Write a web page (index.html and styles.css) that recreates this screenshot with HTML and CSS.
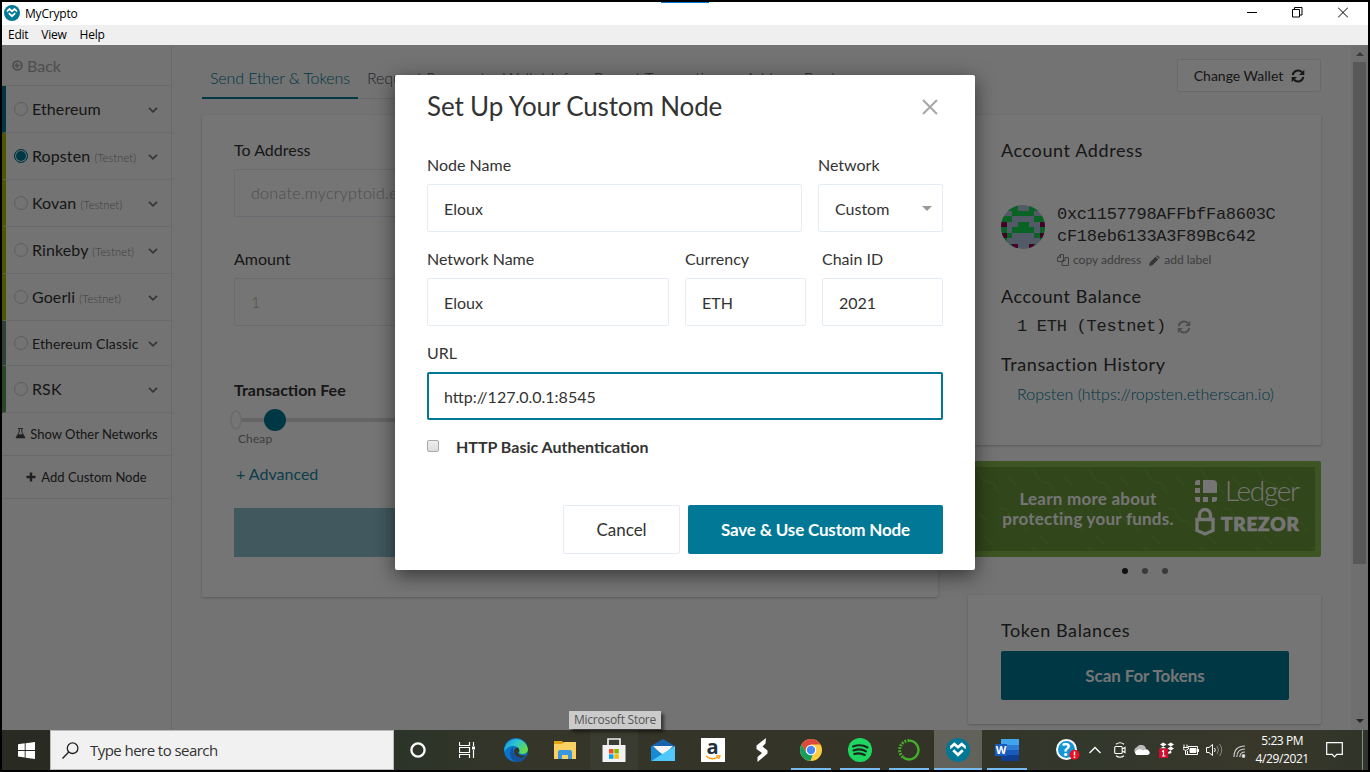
FILE: index.html
```html
<!DOCTYPE html>
<html lang="en">
<head>
<meta charset="utf-8">
<title>MyCrypto</title>
<link rel="stylesheet" href="styles.css">
</head>
<body>
<svg class="defs" width="0" height="0">
  <symbol id="chev" viewBox="0 0 10 8"><path d="M1 1.8 5 5.8 9 1.8" fill="none" stroke="currentColor" stroke-width="1.8"/></symbol>
  <symbol id="refresh" viewBox="0 0 14 14"><path d="M1.7 6.2A5.4 5.4 0 0 1 11 3.3M12.3 7.8A5.4 5.4 0 0 1 3 10.7" fill="none" stroke="currentColor" stroke-width="2"/><path d="M13.3.8V6H8.1ZM.7 13.2V8H5.9Z" fill="currentColor"/></symbol>
  <symbol id="mc" viewBox="0 0 24 24"><circle cx="12" cy="12" r="12" fill="#007896"/><path d="M4.8 9.2 8.3 6 12 9.3 15.7 6 19.2 9.2M7.2 12.3 12 16.8 16.8 12.3" fill="none" stroke="#fff" stroke-width="2.7"/><path d="M4.8 8.4V11M19.2 8.4V11" stroke="#fff" stroke-width="1"/></symbol>
</svg>
<div class="screen">
  <header class="titlebar">
    <svg class="app-icon" width="16" height="16"><use href="#mc"/></svg>
    <span class="app-name">MyCrypto</span>
    <span class="title-accent"></span>
    <svg class="win-btn" width="10" height="11" viewBox="0 0 10 11"><path d="M0 5.5H10" stroke="#000"/></svg>
    <svg class="win-btn" width="11" height="11" viewBox="0 0 11 11"><path d="M.5 2.5H7.5V10H.5ZM2.5 2.5V.5H10V8H7.5" fill="none" stroke="#000"/></svg>
    <svg class="win-btn" width="10" height="11" viewBox="0 0 10 11"><path d="M0 .5 10 10.5M10 .5 0 10.5" stroke="#000"/></svg>
  </header>
  <nav class="menubar"><span>Edit</span><span>View</span><span>Help</span></nav>

  <div class="app">
    <aside class="sidebar">
      <div class="back"><svg width="11" height="11" viewBox="0 0 11 11"><circle cx="5.5" cy="5.5" r="4.4" fill="none" stroke="currentColor" stroke-width="1.8"/><path d="M8.5 5.5H3.4M5.6 3.2 3.4 5.5 5.6 7.8" fill="none" stroke="currentColor" stroke-width="1.4"/></svg>Back</div>
      <div class="net c-eth"><i class="radio"></i><span>Ethereum</span><svg class="chev"><use href="#chev"/></svg></div>
      <div class="net c-test"><i class="radio on"></i><span>Ropsten <small>(Testnet)</small></span><svg class="chev"><use href="#chev"/></svg></div>
      <div class="net c-test"><i class="radio"></i><span>Kovan <small>(Testnet)</small></span><svg class="chev"><use href="#chev"/></svg></div>
      <div class="net c-test"><i class="radio"></i><span>Rinkeby <small>(Testnet)</small></span><svg class="chev"><use href="#chev"/></svg></div>
      <div class="net c-test"><i class="radio"></i><span>Goerli <small>(Testnet)</small></span><svg class="chev"><use href="#chev"/></svg></div>
      <div class="net c-etc"><i class="radio"></i><span>Ethereum Classic</span><svg class="chev"><use href="#chev"/></svg></div>
      <div class="net c-rsk"><i class="radio"></i><span>RSK</span><svg class="chev"><use href="#chev"/></svg></div>
      <div class="side-link"><svg width="11" height="11" viewBox="0 0 11 11"><path d="M3 .5H8M4.2.5V4L1 9.8H10L6.8 4V.5" fill="none" stroke="#555"/><path d="M3.2 6.3H7.8L9.8 10H1.2Z" fill="#444"/></svg>Show Other Networks</div>
      <div class="side-link add"><svg width="10" height="10" viewBox="0 0 10 10"><path d="M5 .5V9.5M.5 5H9.5" stroke="#444" stroke-width="2.4"/></svg>Add Custom Node</div>
    </aside>

    <main class="main">
      <div class="tabs"><span class="tab active">Send Ether &amp; Tokens</span><span class="tab">Request Payment</span><span class="tab">Wallet Info</span><span class="tab">Recent Transactions</span><span class="tab">Address Book</span></div>
      <section class="card send">
        <label class="lbl">To Address</label>
        <div class="field ghost">donate.mycryptoid.eth</div>
        <label class="lbl amount">Amount</label>
        <div class="field ghost">1</div>
        <div class="fee">Transaction Fee</div>
        <div class="slider"><i class="cap"></i><i class="knob"></i><i class="rail"></i></div>
        <div class="cheap">Cheap</div>
        <div class="advanced">+ Advanced</div>
        <div class="send-btn"></div>
      </section>
    </main>

    <aside class="right">
      <div class="change">Change Wallet <svg width="14" height="14"><use href="#refresh"/></svg></div>
      <section class="card account">
        <h2>Account Address</h2>
        <div class="address">
          <svg class="identicon" width="44" height="44" viewBox="0 0 8 8" shape-rendering="crispEdges"><path fill="#b0c4de" d="M0 0H8V8H0Z"/><path fill="#14d84f" d="M1 0H3V1H5V0H7V1H6V2H8V3H6V2H2V3H0V2H2V1H1ZM3 3H5V4H6V5H2V4H3ZM0 4H1V5H2V6H1V7H0ZM7 4H8V7H7V6H6V5H7ZM1 7H2V8H1ZM6 7H7V8H6Z"/><path fill="#950050" d="M0 3H1V4H0ZM7 3H8V4H7ZM0 5H1V6H0ZM7 5H8V6H7ZM2 7H3V8H2ZM5 7H6V8H5Z"/></svg>
          <div>
            <div class="mono">0xc1157798AFFbfFa8603C<br>cF18eb6133A3F89Bc642</div>
            <div class="tools"><svg width="12" height="12" viewBox="0 0 12 12"><path d="M3.5.5H6.5V7.5H.5V3.5ZM3.5.5V3.5H.5M8 3.5H11.5V11.5H5V7.5M8 3.5V6.5H5" fill="none" stroke="#888"/></svg>copy address<svg class="pencil" width="11" height="11" viewBox="0 0 11 11"><path d="M0 11 .8 7.5 6.6 1.8 9.2 4.4 3.5 10.2ZM7.3 1.1 8.3.2 10.8 2.7 9.9 3.7Z" fill="#777"/></svg>add label</div>
          </div>
        </div>
        <h2 class="bal-title">Account Balance</h2>
        <div class="mono balance">1 ETH (Testnet) <svg width="14" height="14"><use href="#refresh"/></svg></div>
        <h2 class="hist-title">Transaction History</h2>
        <div class="hist">Ropsten (https://ropsten.etherscan.io)</div>
      </section>
      <section class="promo">
        <svg class="waves" width="341" height="84"><defs><pattern id="w" width="56" height="78" patternUnits="userSpaceOnUse"><path d="M-4 4C2 0 6 4 7 9S13 15 18 16 21 24 26 26M24 43C30 39 34 43 35 48S41 54 46 55 49 63 54 65M34 10 43 18M4 46 13 54M10 69 19 77" fill="none" stroke="#77ae4a" stroke-width="2"/></pattern></defs><rect width="341" height="84" fill="url(#w)"/></svg>
        <p>Learn more about<br>protecting your funds.</p>
        <div class="brands">
          <div class="brand"><svg width="22" height="22" viewBox="0 0 22 22"><path fill="#fff" d="M8 0H18Q22 0 22 4V13H8ZM0 8H5V13H0ZM0 5V3Q0 0 3 0H5V5ZM0 17H5V22H3Q0 22 0 19ZM8 17H13V22H8ZM17 17H22V19Q22 22 19 22H17Z"/></svg><span class="ledger">Ledger</span></div>
          <div class="brand second"><svg width="20" height="28" viewBox="0 0 20 28"><path d="M4.5 11V7A5.5 5.5 0 0 1 15.5 7V11M2 11.5H18V22.5L10 26 2 22.5Z" fill="none" stroke="#fff" stroke-width="3.4"/></svg><span class="trezor">TREZOR</span></div>
        </div>
      </section>
      <div class="dots"><i class="cur"></i><i></i><i></i></div>
      <section class="card tokens"><h2>Token Balances</h2><div class="scan">Scan For Tokens</div></section>
    </aside>
    <div class="scrollbar"><svg width="8" height="4"><path d="M0 4 4 0 8 4Z" fill="#808080"/></svg><div class="thumb"></div><svg width="8" height="4"><path d="M0 0 4 4 8 0Z" fill="#505050"/></svg></div>

    <div class="backdrop"></div>
    <div class="modal">
      <div class="modal-head"><h1>Set Up Your Custom Node</h1><svg width="16" height="16" viewBox="0 0 16 16"><path d="M1 1 15 15M15 1 1 15" stroke="#aaa" stroke-width="2.2"/></svg></div>
      <div class="row"><div class="grow"><label class="lbl">Node Name</label><div class="field">Eloux</div></div><div class="w125"><label class="lbl">Network</label><div class="field select">Custom<svg width="10" height="5"><path d="M0 0H10L5 5Z" fill="#999"/></svg></div></div></div>
      <div class="row"><div class="grow"><label class="lbl">Network Name</label><div class="field">Eloux</div></div><div class="w121"><label class="lbl">Currency</label><div class="field">ETH</div></div><div class="w121"><label class="lbl">Chain ID</label><div class="field">2021</div></div></div>
      <div class="row"><div class="grow"><label class="lbl">URL</label><div class="field focus">http://127.0.0.1:8545</div></div></div>
      <div class="auth"><i class="check"></i>HTTP Basic Authentication</div>
      <div class="actions"><div class="btn cancel">Cancel</div><div class="btn save">Save &amp; Use Custom Node</div></div>
    </div>
    <div class="tooltip">Microsoft Store</div>
  </div>

  <footer class="taskbar">
    <div class="start"><svg width="17" height="17" viewBox="0 0 17 17"><path fill="#fff" d="M0 2.3 6.7 1.3V8H0ZM7.6 1.2 17 0V8H7.6ZM0 8.9H6.7V15.5L0 14.6ZM7.6 8.9H17V17L7.6 15.7Z"/></svg></div>
    <div class="search"><svg width="17" height="17" viewBox="0 0 17 17"><circle cx="10.6" cy="6.2" r="5.3" fill="none" stroke="#222" stroke-width="1.3"/><path d="M6.8 10 .5 16.4" stroke="#222" stroke-width="1.4"/></svg>Type here to search</div>
    <div class="task"><svg width="16" height="16"><circle cx="8" cy="8" r="6.6" fill="none" stroke="#fff" stroke-width="2.3"/></svg></div>
    <div class="task"><svg width="17" height="16" viewBox="0 0 17 16" fill="none" stroke="#fff"><path d="M.5 0V3.5H10.5V0M.5 16V12.5H10.5V16M.5 5.5H10.5V10.5H.5ZM14.5 0V4M14.5 8V16" stroke-width="1.2"/><path d="M13 6H16" stroke-width="3"/></svg></div>
    <div class="task"><svg width="24" height="24" viewBox="0 0 24 24"><defs><linearGradient id="eg" x1="0" y1="0" x2="1" y2=".5"><stop offset="0" stop-color="#1593d8"/><stop offset=".5" stop-color="#2cc4d4"/><stop offset="1" stop-color="#62dc4b"/></linearGradient></defs><circle cx="12" cy="12" r="12" fill="#0b73c9"/><path d="M.5 10A12 12 0 0 1 24 11C24 16 18 17 15 15 17 12 14 8 9 8 5 8 2 10 .5 14Z" fill="url(#eg)"/><path d="M13 9.5C8 11 9 19 17 20 19 20 21 19 22.5 17 19 18.5 14 17 14 14.5 16 13 15.5 10 13 9.5" fill="#33382e"/><path d="M9 9C3 15 7 23 13 24 17 24 20 22 22 18 18 22 8 20 9 9" fill="#15519d"/></svg></div>
    <div class="task"><svg width="22" height="20" viewBox="0 0 22 20"><path fill="#e5a314" d="M0 1H8L10 3V8H0Z"/><path fill="#fcd163" d="M0 4H8L10 2H22V19H0Z"/><path fill="#3b97dd" d="M4 19V12Q4 10 6 10H16Q18 10 18 12V19H14V15H8V19Z"/></svg></div>
    <div class="task hover"><svg width="24" height="24" viewBox="0 0 24 24"><path d="M6 7V1H18V7" fill="none" stroke="#eee" stroke-width="1.7"/><path fill="#f2f2f2" d="M.5 7H23.5V24H.5Z"/><path fill="#f25022" d="M7 11H11.5V15.5H7Z"/><path fill="#7fba00" d="M12.3 11H16.8V15.5H12.3Z"/><path fill="#00a4ef" d="M7 16.3H11.5V20.8H7Z"/><path fill="#ffb900" d="M12.3 16.3H16.8V20.8H12.3Z"/></svg></div>
    <div class="task"><svg width="24" height="22" viewBox="0 0 24 22"><path fill="#1764ae" d="M0 7 12 0 24 7V13H0Z"/><path fill="#f4f4f4" d="M2 7H22L12 17Z"/><path fill="#1e9fe4" d="M0 7 12 16 0 22Z"/><path fill="#50c8fa" d="M24 7 0 22H24Z"/><path fill="#168bd4" d="M0 7 11 15 0 22Z"/></svg></div>
    <div class="task"><div class="amazon">a<svg width="16" height="5" viewBox="0 0 16 5"><path d="M1 1Q7 6 13 2M11 .8H15L13.5 4" fill="none" stroke="#f90" stroke-width="1.3"/></svg></div></div>
    <div class="task"><svg width="12" height="24" viewBox="0 0 12 24"><path fill="#fff" d="M10 0 .5 7.5V11L6 15 1.5 19V24L11.5 15.5V12.5L6.5 8.5 9.5 5.5Z"/></svg></div>
    <div class="task open"><svg width="22" height="22" viewBox="0 0 22 22"><circle cx="11" cy="11" r="11" fill="#ffcd42"/><path fill="#db4a3b" d="M1.5 5.5A11 11 0 0 1 20.5 5.5H11L6 13Z"/><path fill="#169f5c" d="M1.5 5.5 6.5 14 13 15 10.5 22A11 11 0 0 1 1.5 5.5"/><circle cx="11" cy="11" r="5.3" fill="#fff"/><circle cx="11" cy="11" r="4.2" fill="#4788f4"/></svg></div>
    <div class="task open"><svg width="24" height="24" viewBox="0 0 24 24"><circle cx="12" cy="12" r="12" fill="#1ed760"/><path d="M5 8.5Q13 5.7 19.5 9.5M5.5 12.5Q12.5 10 18 13.3M6.2 16Q12 14.3 16.8 17" fill="none" stroke="#20251d" stroke-width="2.1" stroke-linecap="round"/></svg></div>
    <div class="task open"><svg width="22" height="22" viewBox="0 0 22 22"><path d="M11 1.6A9.4 9.4 0 1 1 5 18.2" fill="none" stroke="#43b02a" stroke-width="2.4"/><path d="M5 18.2A9.4 9.4 0 0 1 11 1.6" fill="none" stroke="#43b02a" stroke-width="3" stroke-dasharray="1.8 1.2"/></svg></div>
    <div class="task open current"><svg width="24" height="24"><use href="#mc"/></svg></div>
    <div class="task open"><svg width="24" height="22" viewBox="0 0 24 22"><path fill="#41a5ee" d="M6 0H24V6H6Z"/><path fill="#2b7cd3" d="M6 6H24V11H6Z"/><path fill="#185abd" d="M6 11H24V16H6Z"/><path fill="#103f91" d="M6 16H24V22H6Z"/><path fill="#185abd" d="M0 5H12V17H0Z"/><text x=".7" y="14.8" class="word">W</text></svg></div>
    <div class="tray">
      <svg width="24" height="22" viewBox="0 0 24 22"><circle cx="10.5" cy="10.5" r="9.5" fill="#1495d4" stroke="#fff" stroke-width="2"/><text x="6" y="16.5" class="q">?</text><circle cx="18.5" cy="15.7" r="5" fill="#e81123"/><path d="M18.5 12.6V16.6M18.5 17.6V19" stroke="#fff" stroke-width="1.5"/></svg>
      <svg class="t-up" width="12" height="8"><path d="M.5 7 6 1.5 11.5 7" fill="none" stroke="#fff" stroke-width="1.3"/></svg>
      <svg class="t-meet" width="12" height="16" fill="none" stroke="#fff" stroke-width="1.1"><rect x=".7" y="4.5" width="7.5" height="7" rx="1"/><path d="M8.2 7 11 5.5V10.5L8.2 9M2 2.3Q6-.8 10 2.3M2 13.7Q6 16.8 10 13.7"/></svg>
      <svg class="t-cloud" width="16" height="10" viewBox="0 0 16 10"><path fill="#bbb" d="M1 8A4 4 0 0 1 3 2 5 5 0 0 1 12 4L6 8Z"/><path fill="#fff" d="M2.5 10A2.5 2.5 0 0 1 2.5 5.5Q6 3 9 5.5 13 3 15 6 17 9 13.5 10Z"/></svg>
      <svg class="t-box" width="16" height="16" viewBox="0 0 16 16"><path fill="#fff" d="M1 2.5 4.2.5 7.5 2.5 4.2 4.5ZM8.5 2.5 11.8.5 15 2.5 11.8 4.5ZM1 6.5 4.2 4.5 7.5 6.5ZM8.5 6.5 11.8 4.5 15 6.5 11.8 8.5ZM9 10 12 8.5 12.5 11 9.5 12Z"/><path fill="#d50a2d" d="M0 6.5H9V16H0Z"/><path d="M3 9.5 4.5 8.5V14M3 14H6.5" fill="none" stroke="#fff" stroke-width="1.2"/></svg>
      <svg class="t-bat" width="16" height="12" viewBox="0 0 16 12" fill="none" stroke="#fff"><path d="M5 2.5H14.5V10.5H4.5V7M15.5 5V8M1 .5V3M4 .5V3M0 3.5H5.5V5Q2.7 8 0 5ZM2.5 6.5V10.5H4.5"/><path d="M7 4.5H13V8.5H7Z" fill="#fff"/></svg>
      <svg class="t-vol" width="17" height="14" viewBox="0 0 17 14" fill="none" stroke="#fff"><path d="M.5 4.5H3L6.5 1.5V12.5L3 9.5H.5ZM8.5 5Q10 7 8.5 9"/><path d="M11 3Q14 7 11 11M13.5 1Q18 7 13.5 13" stroke="#888"/></svg>
      <svg class="t-wifi" width="13" height="13" viewBox="0 0 13 13" fill="none" stroke="#ccc" stroke-width="1.2"><path d="M1 12Q1 1 12 1M3.8 12Q4 4 12 4M6.8 12Q7 7 12 7"/><circle cx="10.5" cy="11" r="1.3" fill="#fff"/></svg>
      <div class="clock">5:23 PM<br>4/29/2021</div>
      <svg class="t-note" width="17" height="16" viewBox="0 0 17 16"><path d="M.7.7H16.3V12.3H10.8L8.5 14.9 6.2 12.3H.7Z" fill="none" stroke="#fff" stroke-width="1.2"/></svg>
      <i class="desk"></i>
    </div>
  </footer>
</div>
</body>
</html>
```
FILE: styles.css
```css
* { box-sizing: border-box; }
body { margin: 0; background: #000; font-family: Lato, sans-serif; color: #333; }
i { font-style: normal; }
h1, h2, p { margin: 0; font-weight: 400; }
svg { display: block; flex: none; }
.defs { position: absolute; }
.screen { width: 1370px; height: 772px; border: 2px solid #000; display: flex; flex-direction: column; overflow: hidden; }

.titlebar { height: 23px; flex: none; background: #fff; display: flex; align-items: center; padding: 0 20px 3px 2px; font: 12px "Open Sans", sans-serif; color: #000; }
.app-icon { margin-top: 2px; }
.app-name { margin: 3px 0 0 5px; letter-spacing: -.2px; }
.title-accent { width: 48px; height: 1px; background: #0078d7; margin: -20px auto 0 583px; }
.win-btn + .win-btn { margin-left: 35px; }
.menubar { height: 20px; flex: none; background: #efefef; display: flex; align-items: center; gap: 13px; padding: 0 0 1px 6px; font: 12px "Open Sans", sans-serif; letter-spacing: -.25px; color: #000; }

.app { position: relative; height: 685px; flex: none; display: flex; background: #fafafa; }
.sidebar { width: 170px; border-right: 1px solid #e5e5e5; font-size: 16px; }
.back { height: 41px; border-bottom: 1px solid #e5e5e5; display: flex; align-items: center; gap: 4px; padding: 0 0 0 10px; color: #aaa; }
.net { height: 47px; border-bottom: 1px solid #e5e5e5; border-left: 4px solid; display: flex; align-items: center; padding: 0 13px 0 8px; }
.net span { color: #333; margin: -1px 0 0 4px; white-space: nowrap; letter-spacing: .1px; }
.net small { font-size: 11px; color: #888; font-weight: 300; letter-spacing: .15px; }
.chev { width: 10px; height: 8px; color: #777; margin: 2px 0 0 auto; }
.c-eth { border-left-color: #007896; }
.c-test { border-left-color: #adc101; }
.c-etc { border-left-color: #669073; height: 45px; }
.c-etc span { font-size: 14px; margin-top: 0; }
.c-rsk { border-left-color: #58a052; }
.radio { width: 14px; height: 14px; border: 1px solid #ccc; border-radius: 50%; flex: none; }
.radio.on { border-color: #007896; background: #007896; box-shadow: inset 0 0 0 1px #fff; }
.side-link { height: 43px; border-bottom: 1px solid #e5e5e5; display: flex; align-items: center; justify-content: center; gap: 4px; font-size: 13px; padding-bottom: 1px; }
.side-link.add { gap: 5px; }

.main { width: 736px; margin-left: 30px; }
.tabs { display: flex; height: 54px; font-size: 16px; font-weight: 300; white-space: nowrap; }
.tab { padding: 23px 8px 0 9px; border-bottom: 1px solid #e5e5e5; color: #556; letter-spacing: -.1px; }
.tab.active { width: 156px; padding: 23px 8px 0; color: #007896; border-bottom: 2px solid #007896; letter-spacing: -.12px; }
.card { background: #fff; border-radius: 2px; box-shadow: 0 1px 3px rgba(0,0,0,.22); }
.send { margin-top: 16px; height: 482px; padding: 24px 32px 0; }
.lbl { display: block; height: 30px; font-size: 16px; line-height: 22px; }
.field { height: 48px; border: 1px solid #e5ecf3; border-radius: 2px; background: #fff; padding: 0 16px; display: flex; align-items: center; font-size: 16px; }
.ghost { color: #aaa; font-weight: 300; letter-spacing: .3px; padding-bottom: 1px; }
.amount { margin-top: 31px; }
.fee { margin-top: 53px; font-weight: 700; font-size: 16px; line-height: 22px; }
.slider { display: flex; align-items: center; height: 22px; margin-top: 8px; margin-left: -4px; position: relative; }
.cap { width: 12px; height: 20px; border: 2px solid #e9e9e9; border-radius: 50%; background: #fff; }
.rail { height: 4px; flex: 1; background: #dcdcdc; }
.knob { position: absolute; left: 34px; width: 22px; height: 22px; border-radius: 50%; background: #007896; }
.cheap { margin: 0 0 0 4px; font-size: 12px; line-height: 16px; color: #888; letter-spacing: .1px; }
.advanced { margin: 16px 0 0 2px; font-size: 16px; line-height: 22px; color: #1a86a1; }
.send-btn { margin-top: 23px; height: 49px; background: #8cbfcd; }

.right { width: 353px; margin-left: 30px; }
.change { width: 144px; height: 33px; margin: 14px 0 0 209px; border: 1px solid #e5e5e5; border-radius: 2px; background: #fff; display: flex; align-items: center; justify-content: center; gap: 8px; padding-left: 1px; font-size: 14px; }
.card h2 { font-size: 18px; line-height: 24px; letter-spacing: .6px; }
.account { margin-top: 23px; height: 330px; padding: 23px 32px 0 33px; }
.address { display: flex; margin-top: 41px; gap: 12px; }
.identicon { border-radius: 50%; margin-top: 2px; }
.mono { font-family: "Liberation Mono", monospace; font-size: 17px; line-height: 22px; letter-spacing: -.27px; padding-top: 1px; color: #3a3a3a; }
.tools { display: flex; align-items: center; font-size: 12px; line-height: 16px; margin-top: 4px; gap: 4px; color: #888; }
.pencil { margin-left: 4px; }
.bal-title { margin-top: 16px; }
.balance { margin: 7px 0 0 16px; display: flex; align-items: center; gap: 11px; }
.balance svg { color: #aaa; }
.hist-title { margin-top: 14px; }
.hist { margin: 7px 0 0 16px; font-size: 16px; line-height: 22px; font-weight: 300; color: #007896; white-space: nowrap; }
.promo { margin-top: 16px; height: 96px; border: 6px solid #86b74e; border-radius: 2px; background: #6b993a; display: flex; color: #fff; position: relative; }
.waves { position: absolute; left: 0; top: 0; opacity: .5; }
.promo p { position: relative; margin: 22px 0 0 27px; width: 174px; text-align: center; white-space: nowrap; font-weight: 700; font-size: 17px; line-height: 20px; letter-spacing: .23px; }
.brands { position: relative; margin: 12px 0 0 20px; }
.brand { display: flex; align-items: center; gap: 8px; height: 24px; }
.second { margin-top: 7px; gap: 6px; }
.ledger { font-weight: 300; font-size: 28px; letter-spacing: -1.3px; margin-top: -2px; }
.trezor { font-weight: 900; font-size: 19px; letter-spacing: .8px; padding-top: 2px; -webkit-text-stroke: .7px #fff; }
.dots { display: flex; justify-content: center; gap: 14px; margin-top: 11px; height: 6px; }
.dots i { width: 6px; height: 6px; border-radius: 50%; background: #7c7c7c; }
.dots .cur { background: #222; }
.tokens { margin-top: 21px; height: 129px; padding: 23px 32px 0 33px; }
.scan { margin-top: 9px; height: 49px; border-radius: 2px; background: #007896; color: #fff; display: flex; align-items: center; justify-content: center; font-size: 17px; font-weight: 700; letter-spacing: -.1px; }
.scrollbar { margin-left: 30px; width: 17px; background: #f1f1f1; display: flex; flex-direction: column; align-items: center; padding: 7px 0 7px; justify-content: space-between; }
.thumb { width: 13px; height: 502px; margin: 6px 0 auto; background: #c1c1c1; }

.backdrop { position: absolute; inset: 0; background: rgba(0,0,0,.54); }
.modal { position: absolute; left: 393px; top: 30px; width: 580px; height: 495px; background: #fff; border-radius: 2px; padding: 16px 32px; box-shadow: 0 5px 20px rgba(0,0,0,.55); }
.modal-head { display: flex; align-items: center; justify-content: space-between; height: 32px; padding-right: 5px; margin-bottom: 31px; }
.modal h1 { font-size: 26px; line-height: 32px; letter-spacing: -.13px; margin-top: -2px; }
.row { display: flex; gap: 16px; margin-bottom: 16px; }
.grow { flex: 1; }
.w125 { width: 125px; }
.w121 { width: 121px; }
.select { justify-content: space-between; padding-right: 10px; }
.focus { border: 2px solid #007896; padding: 0 15px; }
.auth { display: flex; align-items: center; font-weight: 700; font-size: 16px; line-height: 22px; }
.check { width: 12px; height: 12px; border: 1px solid #aaa; border-radius: 2px; background: linear-gradient(#eee, #ddd); margin: -3px 17px 0 0; }
.actions { display: flex; justify-content: flex-end; gap: 8px; margin-top: 47px; }
.btn { height: 49px; border-radius: 2px; display: flex; align-items: center; justify-content: center; font-size: 17px; }
.cancel { width: 117px; border: 1px solid #e5ecf3; }
.save { width: 255px; background: #007896; color: #fff; font-weight: 700; letter-spacing: -.18px; }
.tooltip { position: absolute; left: 567px; top: 666px; width: 92px; height: 18px; background: #cbcbcb; color: #555; font: 12px/18px "Open Sans", sans-serif; letter-spacing: -.25px; text-align: center; white-space: nowrap; box-shadow: 3px 3px 3px rgba(0,0,0,.5); }

.taskbar { height: 40px; flex: none; display: flex; background: linear-gradient(90deg, #292a22 0%, #2b3429 28%, #353529 38%, #343327 68%, #33382c 80%, #38372a 92%, #303529 100%); }
.start { width: 48px; display: flex; align-items: center; justify-content: center; }
.search { width: 344px; background: #f1f1f1; border: 1px solid #bbb; display: flex; align-items: center; gap: 11px; padding-left: 11px; font: 15px "Open Sans", sans-serif; letter-spacing: -.55px; color: #333; }
.task { width: 48px; margin-right: 1.1px; display: flex; align-items: center; justify-content: center; }
.hover { background: #3b3c31; }
.open { background: linear-gradient(#76b9ed, #76b9ed) center bottom / 40px 2px no-repeat; }
.current { background: linear-gradient(#76b9ed, #76b9ed) center bottom / 100% 2px no-repeat #62625a; }
.amazon { width: 24px; height: 24px; background: #fff; color: #222f3e; font: 700 20px/17px "Open Sans", sans-serif; display: flex; flex-direction: column; align-items: center; }
.word { font: 700 11px "Open Sans", sans-serif; fill: #fff; }
.q { font: 700 17px "Open Sans", sans-serif; fill: #fff; }
.tray { display: flex; align-items: center; margin-left: 24px; }
.t-up { margin-left: 9px; }
.t-meet { margin-left: 13px; }
.t-cloud { margin-left: 8px; }
.t-box { margin-left: 9px; }
.t-bat { margin-left: 8px; }
.t-vol { margin-left: 7px; }
.t-wifi { margin-left: 10px; margin-top: 3px; }
.clock { width: 60px; margin-left: 6px; text-align: center; color: #fff; font: 12px/18px "Open Sans", sans-serif; letter-spacing: -.4px; white-space: nowrap; }
.t-note { margin-left: 14px; }
.desk { width: 1px; height: 40px; margin-left: 19px; background: #888; }
```
